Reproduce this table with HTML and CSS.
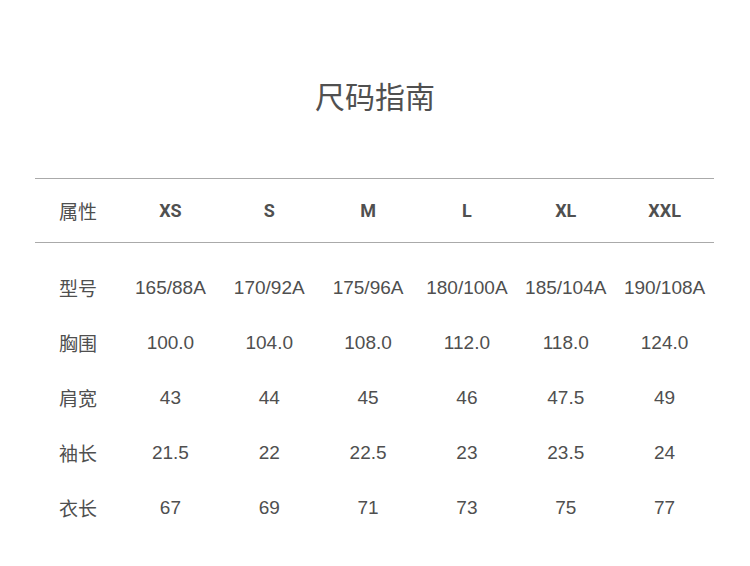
FILE: index.html
```html
<!DOCTYPE html>
<html lang="zh-CN">
<head>
<meta charset="utf-8">
<title>尺码指南</title>
<link rel="stylesheet" href="styles.css">
</head>
<body>
<div class="page">
  <h1 class="title">尺码指南</h1>
  <div class="table">
    <div class="row head">
      <div class="label">属性</div>
      <div class="cell">XS</div>
      <div class="cell">S</div>
      <div class="cell">M</div>
      <div class="cell">L</div>
      <div class="cell">XL</div>
      <div class="cell">XXL</div>
    </div>
    <div class="body">
      <div class="row">
        <div class="label">型号</div>
        <div class="cell">165/88A</div>
        <div class="cell">170/92A</div>
        <div class="cell">175/96A</div>
        <div class="cell">180/100A</div>
        <div class="cell">185/104A</div>
        <div class="cell">190/108A</div>
      </div>
      <div class="row">
        <div class="label">胸围</div>
        <div class="cell">100.0</div>
        <div class="cell">104.0</div>
        <div class="cell">108.0</div>
        <div class="cell">112.0</div>
        <div class="cell">118.0</div>
        <div class="cell">124.0</div>
      </div>
      <div class="row">
        <div class="label">肩宽</div>
        <div class="cell">43</div>
        <div class="cell">44</div>
        <div class="cell">45</div>
        <div class="cell">46</div>
        <div class="cell">47.5</div>
        <div class="cell">49</div>
      </div>
      <div class="row">
        <div class="label">袖长</div>
        <div class="cell">21.5</div>
        <div class="cell">22</div>
        <div class="cell">22.5</div>
        <div class="cell">23</div>
        <div class="cell">23.5</div>
        <div class="cell">24</div>
      </div>
      <div class="row">
        <div class="label">衣长</div>
        <div class="cell">67</div>
        <div class="cell">69</div>
        <div class="cell">71</div>
        <div class="cell">73</div>
        <div class="cell">75</div>
        <div class="cell">77</div>
      </div>
    </div>
  </div>
</div>
</body>
</html>
```

FILE: styles.css
```css
* { box-sizing: border-box; }
html, body { margin: 0; padding: 0; background: #fff; }
body {
  width: 750px;
  height: 566px;
  overflow: hidden;
  color: #4f4f4f;
  font-family: "Liberation Sans", "Noto Sans CJK SC", sans-serif;
}
.page { padding-top: 75px; }
.title {
  margin: 0;
  text-align: center;
  font-family: "Noto Sans CJK SC", sans-serif;
  font-weight: 400;
  font-size: 30px;
  line-height: 40px;
  color: #505050;
}
.table {
  margin: 63px 36px 0 35px;
}
.row {
  display: grid;
  grid-template-columns: 86px repeat(6, 1fr);
  align-items: center;
  height: 55px;
  font-size: 19px;
}
.head {
  height: 65px;
  border-top: 1px solid #aaa;
  border-bottom: 1px solid #aaa;
}
.head .cell {
  font-family: Roboto, "Liberation Sans", sans-serif;
  font-weight: 700;
  font-size: 18px;
  color: #505050;
}
.body { padding-top: 17px; }
.label {
  padding-left: 24px;
  font-family: "Noto Sans CJK SC", sans-serif;
  font-size: 19px;
  line-height: 1;
}
.cell {
  text-align: center;
  white-space: nowrap;
  line-height: 1;
}
```
